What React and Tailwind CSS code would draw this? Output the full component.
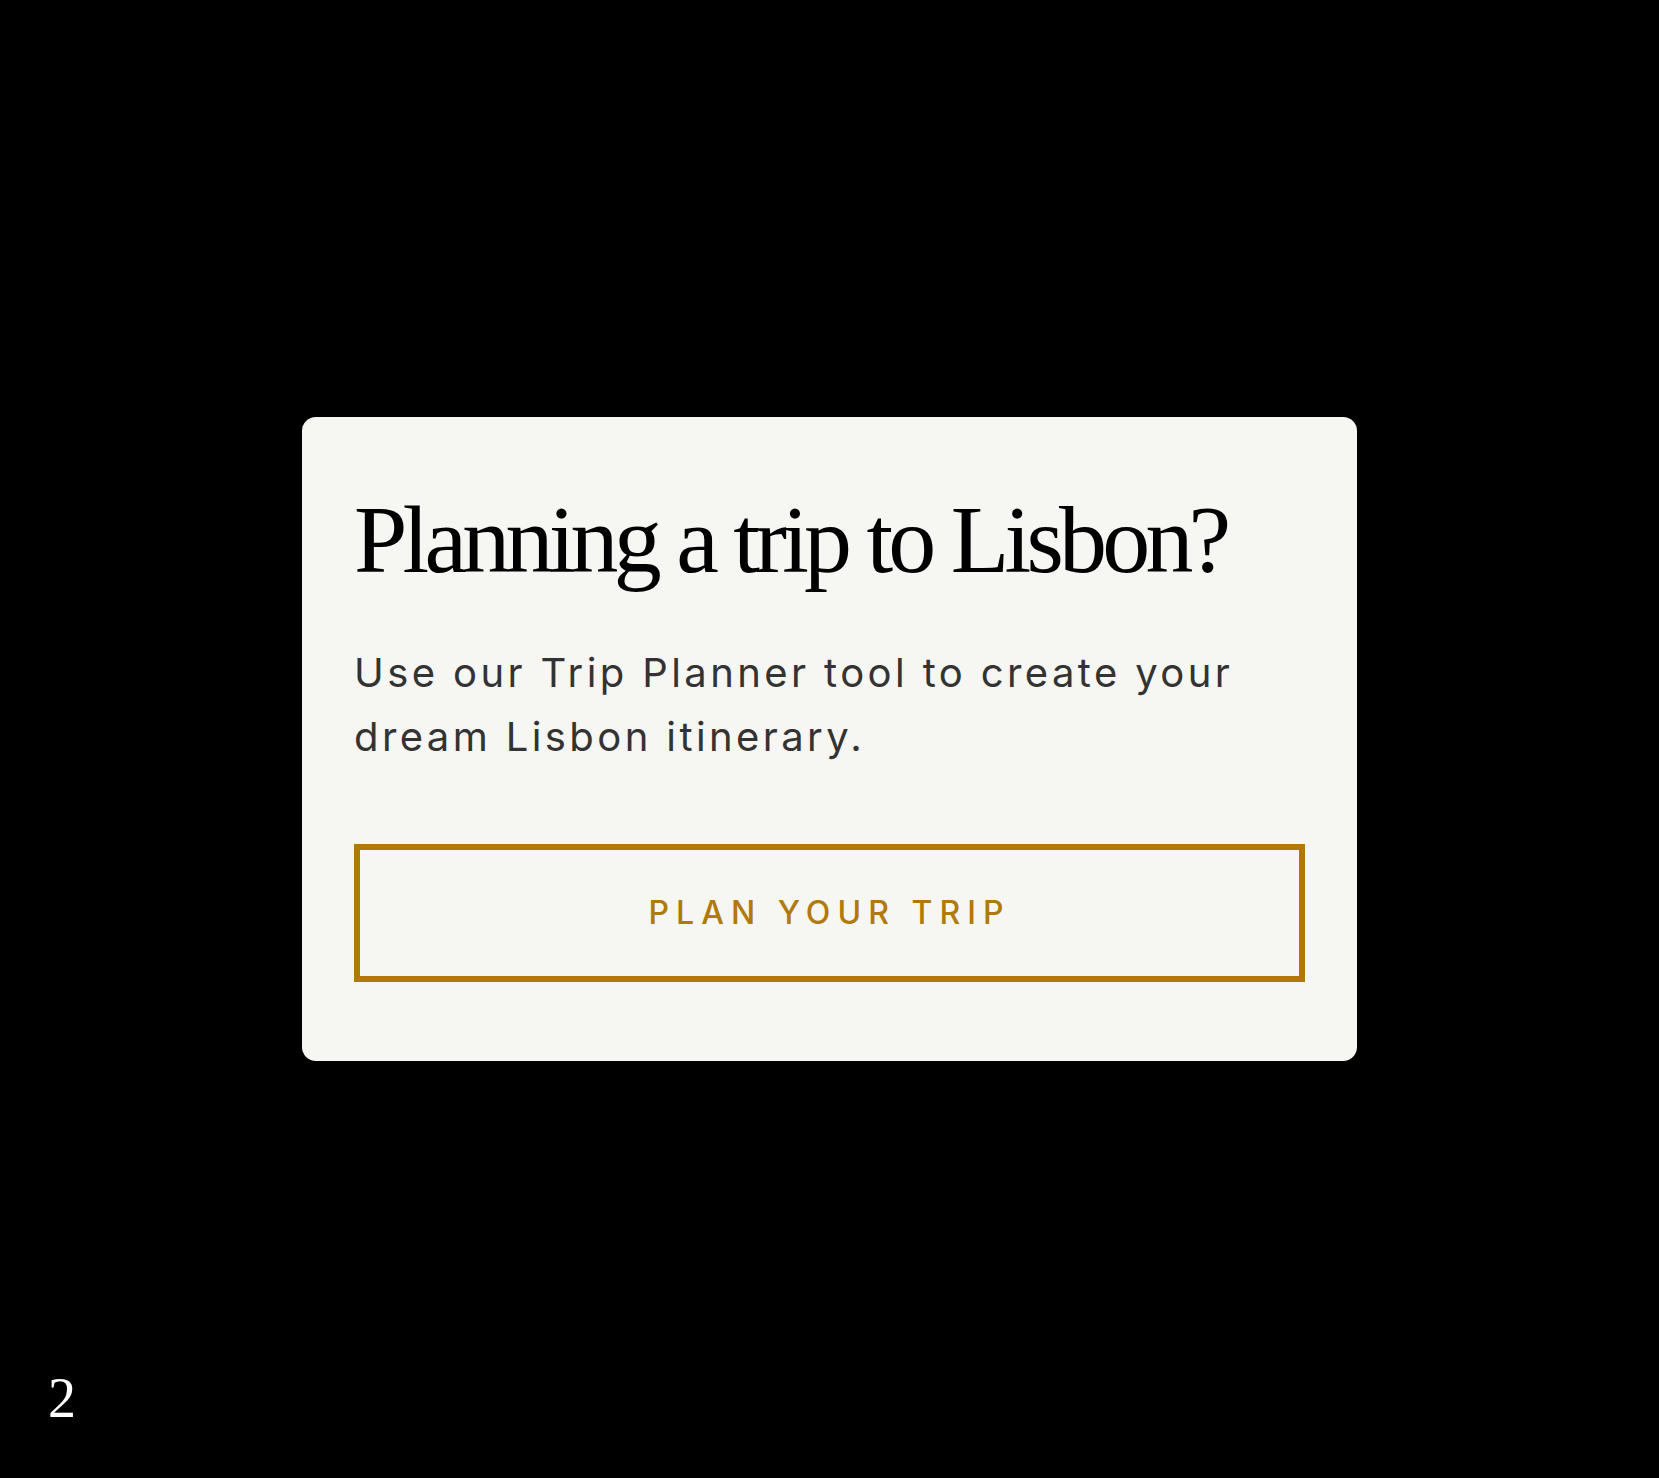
export default function App() {
  return (
    <div className="relative min-h-screen w-full bg-black flex items-center justify-center">
      <div className="w-[1055px] rounded-[14px] bg-[#f6f6f2] px-[52px] pt-[75px] pb-[79px]">
        <h1 className="font-['Liberation_Serif',serif] text-[96px] leading-[1] tracking-[-0.05em] text-black">
          Planning a trip to Lisbon?
        </h1>
        <p className="mt-[53px] font-['Inter',sans-serif] text-[40px] leading-[64px] tracking-[0.085em] text-[#333333]">
          Use our Trip Planner tool to create your dream Lisbon itinerary.
        </p>
        <button className="mt-[75px] flex h-[138px] w-full items-center justify-center border-[6px] border-[#b07a06] font-['Inter',sans-serif] text-[32px] font-medium tracking-[0.22em] text-[#b07a06]">
          PLAN YOUR TRIP
        </button>
      </div>
      <div className="absolute left-[48px] bottom-[52px] font-['Liberation_Serif',serif] text-[56px] leading-none text-white">
        2
      </div>
    </div>
  )
}
